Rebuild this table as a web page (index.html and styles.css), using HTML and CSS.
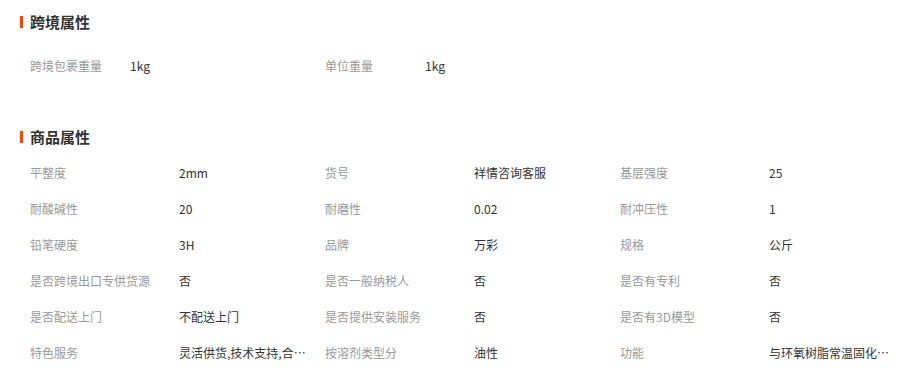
FILE: index.html
```html
<!DOCTYPE html>
<html lang="zh-CN">
<head>
<meta charset="utf-8">
<link rel="stylesheet" href="styles.css">
</head>
<body>
<div class="page">
  <section class="sec sec-cross">
    <h2 class="title">跨境属性</h2>
    <div class="rows rows-cross">
      <div class="item"><span class="label">跨境包裹重量</span><span class="value">1kg</span></div>
      <div class="item"><span class="label">单位重量</span><span class="value">1kg</span></div>
    </div>
  </section>
  <section class="sec sec-goods">
    <h2 class="title">商品属性</h2>
    <div class="rows">
      <div class="item"><span class="label">平整度</span><span class="value">2mm</span></div>
      <div class="item"><span class="label">货号</span><span class="value">祥情咨询客服</span></div>
      <div class="item"><span class="label">基层强度</span><span class="value">25</span></div>
      <div class="item"><span class="label">耐酸碱性</span><span class="value">20</span></div>
      <div class="item"><span class="label">耐磨性</span><span class="value">0.02</span></div>
      <div class="item"><span class="label">耐冲压性</span><span class="value">1</span></div>
      <div class="item"><span class="label">铅笔硬度</span><span class="value">3H</span></div>
      <div class="item"><span class="label">品牌</span><span class="value">万彩</span></div>
      <div class="item"><span class="label">规格</span><span class="value">公斤</span></div>
      <div class="item"><span class="label">是否跨境出口专供货源</span><span class="value">否</span></div>
      <div class="item"><span class="label">是否一般纳税人</span><span class="value">否</span></div>
      <div class="item"><span class="label">是否有专利</span><span class="value">否</span></div>
      <div class="item"><span class="label">是否配送上门</span><span class="value">不配送上门</span></div>
      <div class="item"><span class="label">是否提供安装服务</span><span class="value">否</span></div>
      <div class="item"><span class="label">是否有3D模型</span><span class="value">否</span></div>
      <div class="item"><span class="label">特色服务</span><span class="value">灵活供货,技术支持,合…</span></div>
      <div class="item"><span class="label">按溶剂类型分</span><span class="value">油性</span></div>
      <div class="item"><span class="label">功能</span><span class="value">与环氧树脂常温固化…</span></div>
    </div>
  </section>
</div>
</body>
</html>
```

FILE: styles.css
```css
* { box-sizing: border-box; }
html, body { margin: 0; padding: 0; background: #fff; }
body {
  font-family: "Microsoft YaHei", "Noto Sans CJK SC", "Liberation Sans", sans-serif;
  font-size: 12px;
  color: #333;
}
.page { padding: 12px 0 0 20px; }
.sec-goods { margin-top: 43px; }
.title {
  margin: 0;
  height: 20px;
  line-height: 20px;
  font-size: 15px;
  font-weight: bold;
  color: #333;
  display: flex;
  align-items: center;
}
.title::before {
  content: "";
  display: block;
  width: 3px;
  height: 12px;
  background: #ff4400;
  margin-right: 7px;
}
.rows {
  display: grid;
  grid-template-columns: repeat(3, 295px);
  padding-left: 10px;
  margin-top: 8px;
}
.rows-cross { margin-top: 16px; }
.item {
  display: flex;
  align-items: center;
  height: 36px;
  line-height: 36px;
  white-space: nowrap;
}
.label {
  width: 149px;
  flex: none;
  color: #999;
}
.rows-cross .label { width: 100px; }
.value {
  width: 140px;
  color: #333;
}
```
